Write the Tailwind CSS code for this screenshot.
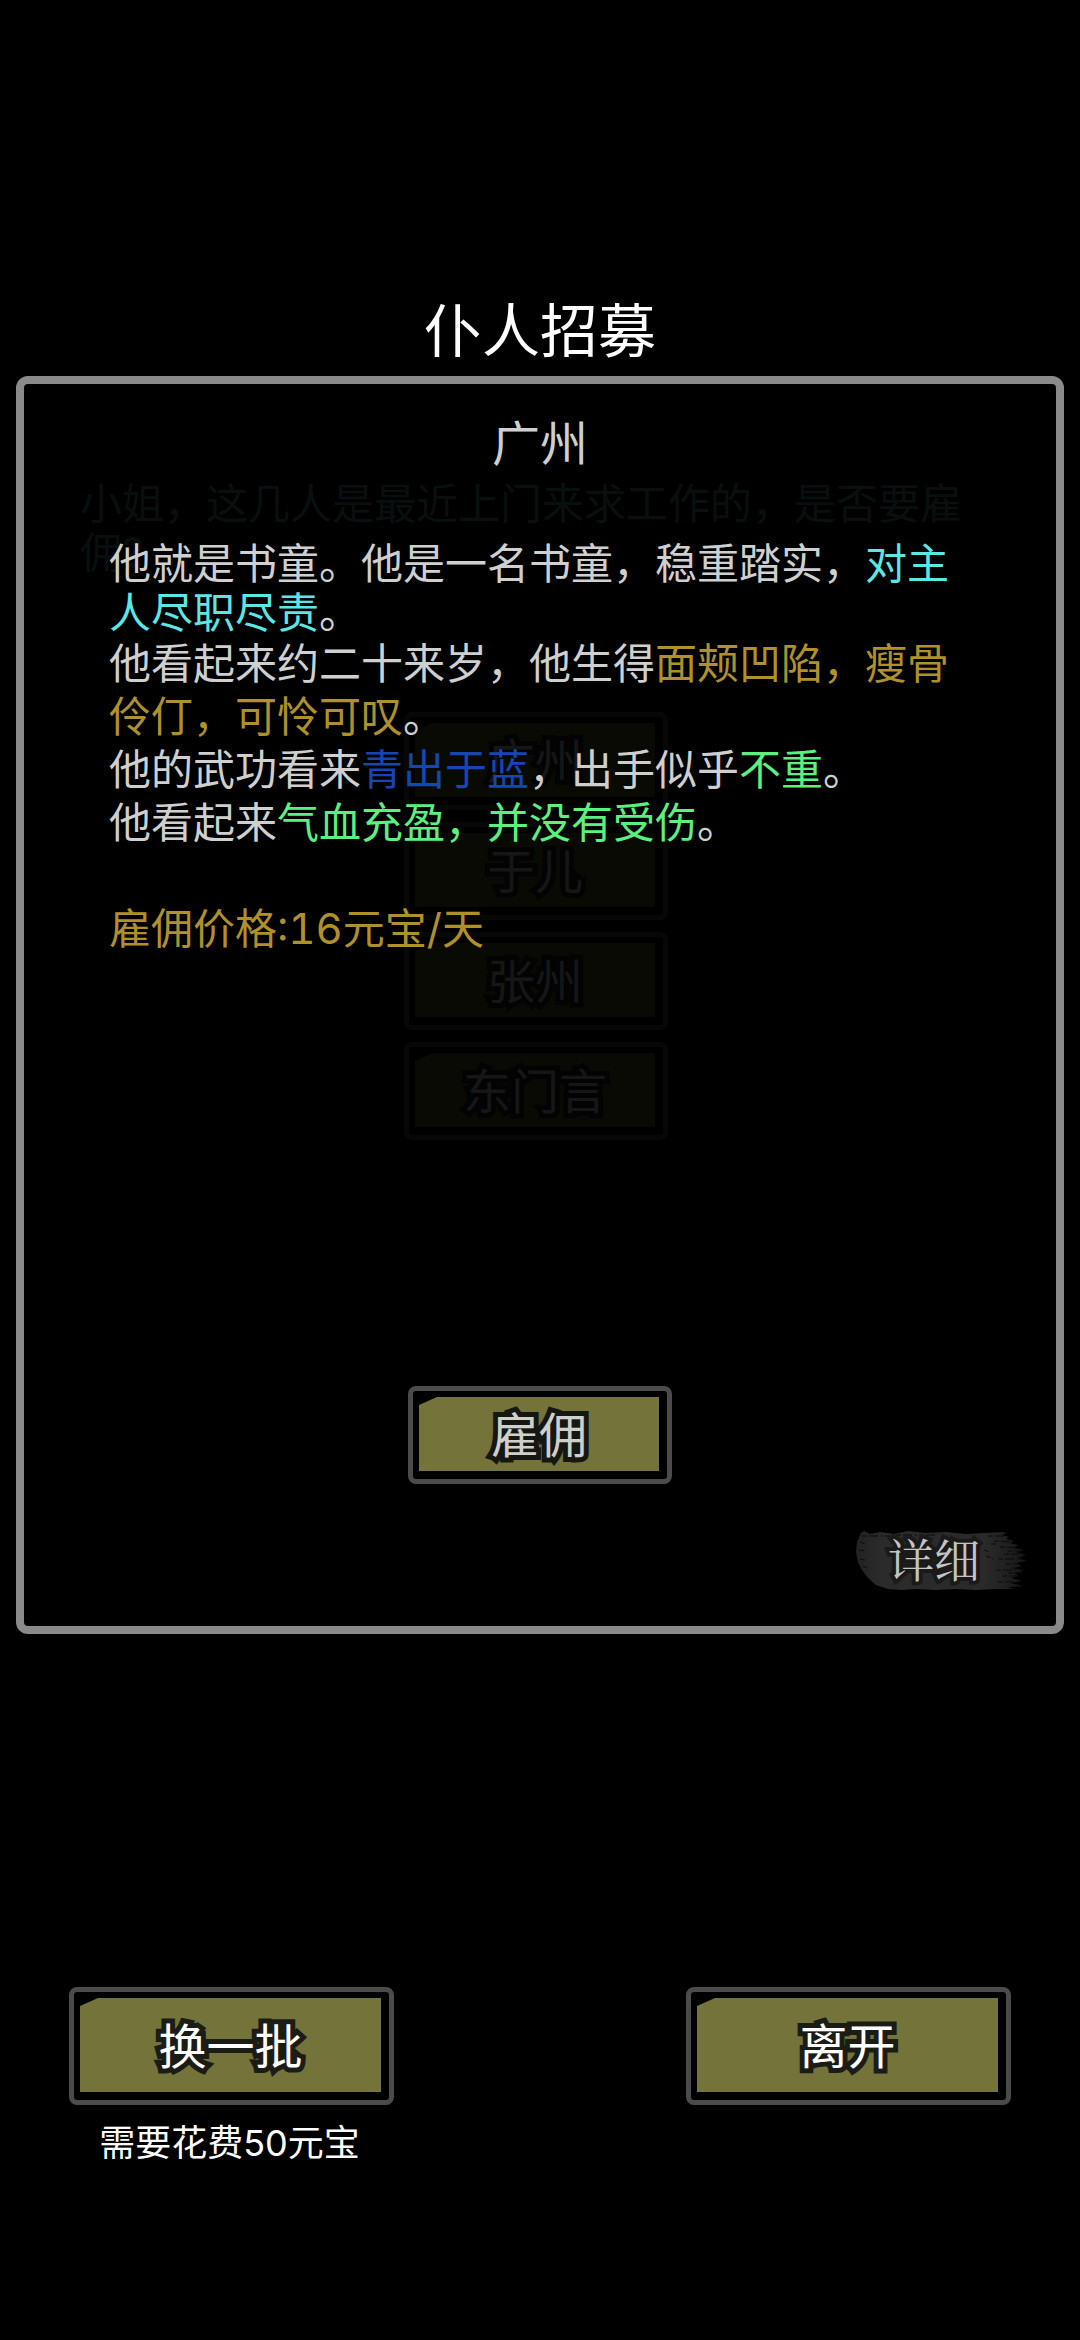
<!DOCTYPE html>
<html lang="zh-CN">
<head>
<meta charset="utf-8">
<meta name="viewport" content="width=device-width, initial-scale=1">
<title>仆人招募</title>
<script src="https://cdn.jsdelivr.net/npm/@tailwindcss/browser@4"></script>
</head>
<body class="bg-black text-white font-[Inter,'Noto_Sans_CJK_SC',sans-serif] [stroke-linejoin:round]">
<main class="flex min-h-screen flex-col px-4 pt-[295px]">
  <h1 class="text-center text-[58px] leading-[72px] font-normal">仆人招募</h1>

  <section class="relative mt-[9px] flex min-h-[1258px] flex-col rounded-xl border-8 border-[#8a8a8a]">
    <!-- candidate list, dimmed behind the open profile -->
    <div class="absolute inset-0 flex flex-col px-14 pt-[95px]" aria-hidden="true">
      <p class="h-[133px] text-[42px] leading-[49px] text-[#08100f]">小姐，这几人是最近上门来求工作的，是否要雇佣?</p>
      <ul class="mt-25 flex flex-col items-center gap-3 pr-2">
        <li class="flex h-[98px] w-[264px] rounded-lg border-5 border-[#070707] pt-[6px] pr-2 pb-2 pl-[6px]"><span class="flex flex-1 items-center justify-center bg-[#0a0a05] pt-1 text-5xl text-[#161616] [clip-path:polygon(18px_0,100%_0,100%_100%,0_100%,0_8px)] [paint-order:stroke_fill] [-webkit-text-stroke:10px_#030303]">广州</span></li>
        <li class="flex h-[98px] w-[264px] rounded-lg border-5 border-[#070707] pt-[6px] pr-2 pb-2 pl-[6px]"><span class="flex flex-1 items-center justify-center bg-[#0a0a05] pt-1 text-5xl text-[#161616] [clip-path:polygon(18px_0,100%_0,100%_100%,0_100%,0_8px)] [paint-order:stroke_fill] [-webkit-text-stroke:10px_#030303]">于儿</span></li>
        <li class="flex h-[98px] w-[264px] rounded-lg border-5 border-[#070707] pt-[6px] pr-2 pb-2 pl-[6px]"><span class="flex flex-1 items-center justify-center bg-[#0a0a05] pt-1 text-5xl text-[#161616] [clip-path:polygon(18px_0,100%_0,100%_100%,0_100%,0_8px)] [paint-order:stroke_fill] [-webkit-text-stroke:10px_#030303]">张州</span></li>
        <li class="flex h-[98px] w-[264px] rounded-lg border-5 border-[#070707] pt-[6px] pr-2 pb-2 pl-[6px]"><span class="flex flex-1 items-center justify-center bg-[#0a0a05] pt-1 text-5xl text-[#161616] [clip-path:polygon(18px_0,100%_0,100%_100%,0_100%,0_8px)] [paint-order:stroke_fill] [-webkit-text-stroke:10px_#030303]">东门言</span></li>
      </ul>
    </div>

    <div class="relative flex flex-1 flex-col">
      <h2 class="mt-[30px] text-center text-5xl leading-[60px] font-normal text-[#cfcfcf]">广州</h2>
      <div class="mt-[65px] px-[85px] text-[42px] leading-[53px] text-[#cfcfcf]">
        <p class="leading-[49px]">他就是书童。他是一名书童，稳重踏实，<span class="text-[#5ce6e6]">对主人尽职尽责</span>。</p>
        <p>他看起来约二十来岁，他生得<span class="text-[#b0902a]">面颊凹陷，瘦骨伶仃，可怜可叹</span>。</p>
        <p>他的武功看来<span class="text-[#1546b4]">青出于蓝</span>，出手似乎<span class="text-[#5cf07c]">不重</span>。</p>
        <p>他看起来<span class="text-[#5cf07c]">气血充盈，并没有受伤</span>。</p>
        <p class="mt-[53px] tabular-nums text-[#b0902a]">雇佣价格:16元宝/天</p>
      </div>
      <div class="mt-auto flex flex-col">
        <button type="button" class="flex h-[98px] w-[264px] self-center rounded-lg border-5 border-[#4b4b4b] pt-[6px] pr-2 pb-2 pl-[6px]"><span class="flex flex-1 items-center justify-center self-stretch bg-[#74733a] pt-1 text-5xl text-[#cfd0cc] [clip-path:polygon(18px_0,100%_0,100%_100%,0_100%,0_8px)] [paint-order:stroke_fill] [-webkit-text-stroke:10px_#171712]">雇佣</span></button>
        <button type="button" class="relative mt-11 mr-6 mb-8 flex h-[66px] w-[176px] items-center self-end pb-2 pl-8">
          <svg class="absolute inset-0" width="176" height="66" viewBox="0 0 176 66" aria-hidden="true">
            <defs><linearGradient id="ink" x1="0" x2="1"><stop offset="0" stop-color="#222"/><stop offset=".15" stop-color="#2b2b2b"/><stop offset=".75" stop-color="#2a2a2a"/><stop offset="1" stop-color="#161616"/></linearGradient></defs>
            <path fill="url(#ink)" d="M5 5 8 3 14 6 24 4 38 6 52 3 70 5 90 4 110 6 128 5 146 4 151 5 146 7 153 9 150 11 158 13 154 15 162 17 158 20 168 22 160 24 170 27 162 30 171 33 160 35 166 38 159 40 168 43 158 45 163 48 155 50 166 53 154 55 168 58 152 59 158 61 140 61 120 62 100 61 80 62 60 61 45 62 32 61 20 57 12 50 6 42 2 34 0 24 1 14z"/>
            <path stroke="#0a0a0a" stroke-width="1" stroke-dasharray="5 2 9 3 2 2" fill="none" d="M132 8h20M138 13l22 1M144 19l22 1M135 16h6M148 26h20M142 31h24M150 36h14M140 42h24M146 48h16M142 54h22M6 8h28M4 14l5 2M3 22l6 1M4 31l5 1M7 38l4 2M40 7h40M128 22l6 2M130 28l8 3M152 23h12M152 45h14M156 40h10"/>
          </svg>
          <span class="relative text-[46px] text-[#c4c4c4] font-[KaiTi,'Noto_Serif_CJK_SC','Noto_Sans_CJK_SC',serif] [paint-order:stroke_fill] [-webkit-text-stroke:8px_#1a1a1a]">详细</span>
        </button>
      </div>
    </div>
  </section>

  <footer class="mt-[353px] flex items-start justify-between pr-[53px] pl-[53px]">
    <div class="flex flex-col">
      <button type="button" aria-describedby="cost" class="flex h-[118px] w-[325px] rounded-lg border-5 border-[#4b4b4b] pt-[6px] pr-2 pb-2 pl-[6px]"><span class="flex flex-1 items-center justify-center self-stretch bg-[#74733a] pt-1 text-5xl text-white [clip-path:polygon(18px_0,100%_0,100%_100%,0_100%,0_8px)] [paint-order:stroke_fill] [-webkit-text-stroke:10px_#1c1c16]">换一批</span></button>
      <p id="cost" class="mt-4 pr-1 text-center text-4xl leading-11">需要花费50元宝</p>
    </div>
    <button type="button" class="flex h-[118px] w-[325px] rounded-lg border-5 border-[#4b4b4b] pt-[6px] pr-2 pb-2 pl-[6px]"><span class="flex flex-1 items-center justify-center self-stretch bg-[#74733a] pt-1 text-5xl text-white [clip-path:polygon(18px_0,100%_0,100%_100%,0_100%,0_8px)] [paint-order:stroke_fill] [-webkit-text-stroke:10px_#1c1c16]">离开</span></button>
  </footer>
</main>
</body>
</html>
